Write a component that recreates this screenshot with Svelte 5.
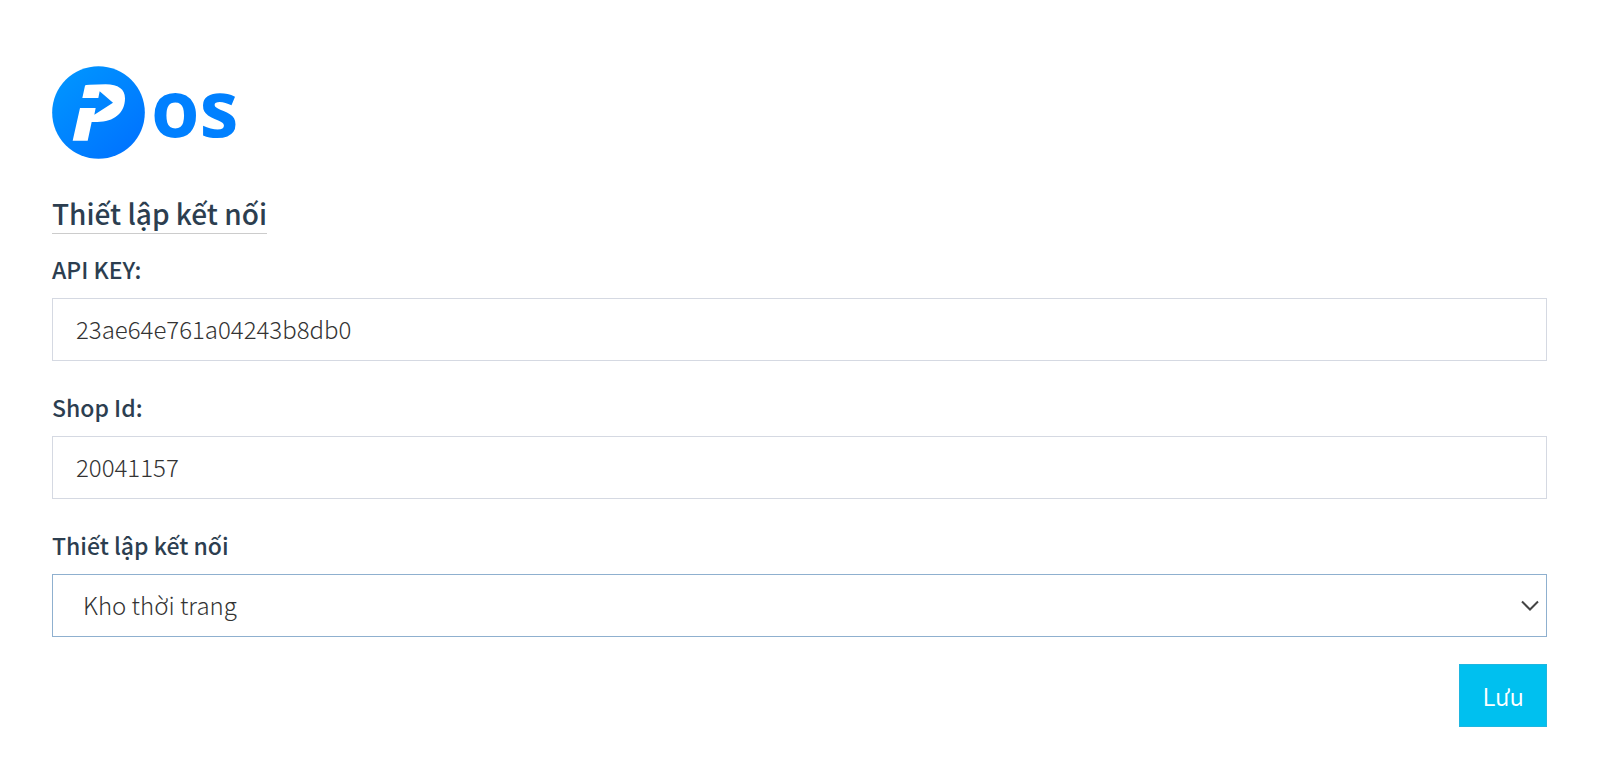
<script>
  let apiKey = $state('23ae64e761a04243b8db0');
  let shopId = $state('20041157');
  let warehouse = $state('Kho thời trang');

  const warehouses = ['Kho thời trang'];

  function save(e) {
    e.preventDefault();
  }
</script>

<main class="page">
  <svg class="logo" viewBox="37 48 600 279" role="img" aria-label="Pos">
    <defs>
      <linearGradient id="disc" x1="0.1" y1="0.1" x2="0.8" y2="0.9">
        <stop offset="0" stop-color="#0094ff" />
        <stop offset="1" stop-color="#0075ff" />
      </linearGradient>
    </defs>
    <circle cx="176.500" cy="187.500" r="139" fill="url(#disc)" />
    <path
      fill="#fff"
      d="M136 107Q137 104 150 104L198 103C236 103 256 118 256 145C256 190 222 217 170 216L156 216L144 272H99L121 174H168L164 194L220 158L180 124L176 144H128Z"
    />
    <text class="wordmark" x="334" y="261">os</text>
  </svg>

  <h1>Thiết lập kết nối</h1>

  <form onsubmit={save}>
    <div class="field">
      <label for="api-key">API KEY:</label>
      <input id="api-key" type="text" bind:value={apiKey} />
    </div>

    <div class="field">
      <label for="shop-id">Shop Id:</label>
      <input id="shop-id" type="text" bind:value={shopId} />
    </div>

    <div class="field">
      <label for="warehouse">Thiết lập kết nối</label>
      <div class="select">
        <select id="warehouse" bind:value={warehouse}>
          {#each warehouses as name}
            <option value={name}>{name}</option>
          {/each}
        </select>
        <svg class="chevron" viewBox="0 0 18 12" aria-hidden="true">
          <path d="M1 1.500L9 9.500L17 1.500" />
        </svg>
      </div>
    </div>

    <button type="submit">Lưu</button>
  </form>
</main>

<style>
  :global(body) {
    background: #fff;
  }

  .page {
    padding: 66px 53px 54px 52px;
    font-family: 'Noto Sans CJK JP', 'Noto Sans', sans-serif;
    font-size: 24px;
    color: #333;
  }

  .logo {
    display: block;
    width: 200px;
    height: 93px;
    overflow: visible;
  }

  .wordmark {
    font-family: 'Open Sans', sans-serif;
    font-size: 235px;
    font-weight: 700;
    fill: #0080ff;
  }

  h1 {
    width: fit-content;
    margin: 35px 0 0;
    border-bottom: 1px solid #ccc;
    font-size: 28px;
    font-weight: 500;
    line-height: 39px;
    color: #2c3e50;
  }

  form {
    display: flex;
    flex-direction: column;
    gap: 27px;
    margin-top: 16px;
  }

  .field {
    display: flex;
    flex-direction: column;
    gap: 10px;
  }

  label {
    font-size: 23px;
    font-weight: 500;
    line-height: 38px;
    color: #2c3e50;
  }

  input,
  select {
    box-sizing: border-box;
    width: 100%;
    height: 63px;
    padding: 0 23px 2px;
    border: 1px solid #d5d9e2;
    border-radius: 0;
    background: #fff;
    font: inherit;
    font-weight: 300;
    color: #333;
    outline: none;
  }

  .select {
    position: relative;
  }

  select {
    display: block;
    appearance: none;
    padding: 0 48px 2px 30px;
    border-color: #8fb0cf;
  }

  .chevron {
    position: absolute;
    top: 26px;
    right: 8px;
    width: 18px;
    height: 12px;
    fill: none;
    stroke: #444;
    stroke-width: 2;
    pointer-events: none;
  }

  button {
    align-self: flex-end;
    height: 63px;
    padding: 0 22px;
    border: 1px solid #1fb6e0;
    background: #00c0ef;
    font: inherit;
    font-weight: 350;
    color: #fff;
    cursor: pointer;
  }
</style>
